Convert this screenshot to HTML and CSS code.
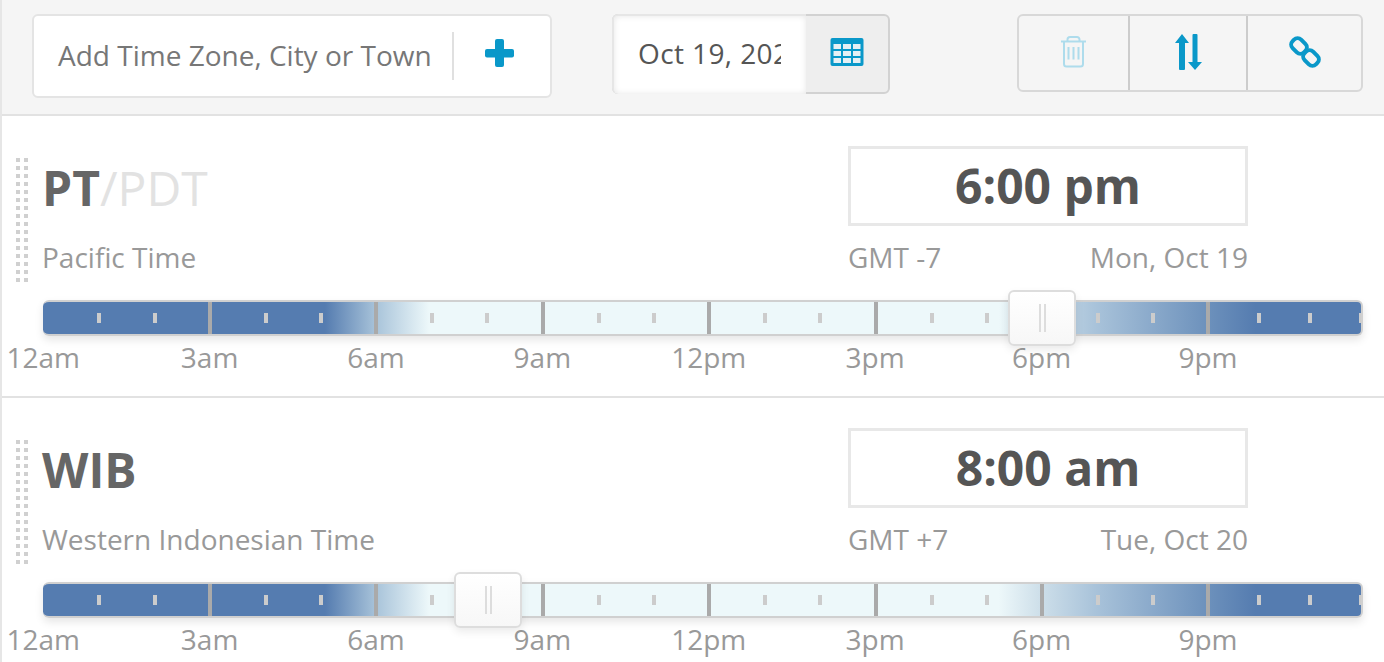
FILE: index.html
```html
<!DOCTYPE html>
<html>
  <head>
    <title>Time Zone Converter</title>
    <link rel="stylesheet" href="styles.css">
  </head>
  <body>
    <div class="toolbar">
      <div class="add-zone">
        <span class="add-text">Add Time Zone, City or Town</span>
        <span class="add-btn">
          <svg width="29" height="28" viewBox="0 0 29 28" fill="#0a98c9">
            <rect x="10" y="0" width="9" height="28" rx="2"/>
            <rect x="0" y="10" width="29" height="8.500" rx="2"/>
          </svg>
        </span>
      </div>
      <div class="date-picker">
        <div class="date-input"><span class="date-text">Oct 19, 2020</span></div>
        <div class="date-btn">
          <svg width="34" height="30" viewBox="0 0 34 30">
            <rect x="0.5" y="1" width="33" height="28" rx="2" fill="#0a98c9"/>
            <g fill="#e6f0f4">
              <rect x="3.5" y="7" width="7.5" height="5"/><rect x="13" y="7" width="8" height="5"/><rect x="23" y="7" width="7.5" height="5"/>
              <rect x="3.5" y="14" width="7.5" height="5"/><rect x="13" y="14" width="8" height="5"/><rect x="23" y="14" width="7.5" height="5"/>
              <rect x="3.5" y="21" width="7.5" height="5"/><rect x="13" y="21" width="8" height="5"/><rect x="23" y="21" width="7.5" height="5"/>
            </g>
          </svg>
        </div>
      </div>
      <div class="actions">
        <div class="action action-trash">
          <svg width="26" height="32" viewBox="0 0 26 32" fill="none" stroke="#aedcec" stroke-width="2">
            <path d="M0 5.500h25"/>
            <path d="M6.500 5.500V3.500a2.500 2.500 0 0 1 2.500-2.500h7a2.500 2.500 0 0 1 2.500 2.500v2"/>
            <path d="M3 5.500v22.500a2.500 2.500 0 0 0 2.500 2.500h14a2.500 2.500 0 0 0 2.500-2.500V5.500"/>
            <path d="M7.500 11v12.500M12.500 11v12.500M17.500 11v12.500"/>
          </svg>
        </div>
        <div class="action action-sort">
          <svg width="27" height="36" viewBox="0 0 27 36" fill="#0a98c9">
            <path d="M7 0l7 9h-4v26a1 1 0 0 1-1 1H5a1 1 0 0 1-1-1V9H0z"/>
            <path d="M20 36l-7-8h4.500V1a1 1 0 0 1 1-1h3a1 1 0 0 1 1 1v27H27z"/>
          </svg>
        </div>
        <div class="action action-link">
          <svg width="32" height="32" viewBox="0 0 32 32" fill="none" stroke="#0a98c9" stroke-width="4">
            <rect x="-8" y="-6" width="16" height="12" rx="5" transform="translate(10 10) rotate(45)"/>
            <rect x="-8" y="-6" width="16" height="12" rx="5" transform="translate(22 22) rotate(45)"/>
          </svg>
        </div>
      </div>
    </div>

    <div class="zone">
      <div class="zone-top">
        <div class="handle"></div>
        <div class="zone-name">
          <div class="abbr"><b>PT</b><span class="abbr-alt">/PDT</span></div>
          <div class="full-name">Pacific Time</div>
        </div>
        <div class="clock">
          <div class="clock-time">6:00 pm</div>
          <div class="clock-meta"><span>GMT -7</span><span>Mon, Oct 19</span></div>
        </div>
      </div>
      <div class="track">
        <div class="segs">
          <div class="seg first"><i></i><i></i></div>
          <div class="seg"><i></i><i></i></div>
          <div class="seg"><i></i><i></i></div>
          <div class="seg"><i></i><i></i></div>
          <div class="seg"><i></i><i></i></div>
          <div class="seg"><i></i><i></i></div>
          <div class="seg"><i></i><i></i></div>
          <div class="seg last"><i></i><i></i><i></i></div>
        </div>
        <div class="thumb" style="left: 965px"><i></i><i></i></div>
      </div>
      <div class="hours">
        <span>12am</span><span>3am</span><span>6am</span><span>9am</span><span>12pm</span><span>3pm</span><span>6pm</span><span>9pm</span>
      </div>
    </div>

    <div class="zone">
      <div class="zone-top">
        <div class="handle"></div>
        <div class="zone-name">
          <div class="abbr"><b>WIB</b></div>
          <div class="full-name">Western Indonesian Time</div>
        </div>
        <div class="clock">
          <div class="clock-time">8:00 am</div>
          <div class="clock-meta"><span>GMT +7</span><span>Tue, Oct 20</span></div>
        </div>
      </div>
      <div class="track">
        <div class="segs">
          <div class="seg first"><i></i><i></i></div>
          <div class="seg"><i></i><i></i></div>
          <div class="seg"><i></i><i></i></div>
          <div class="seg"><i></i><i></i></div>
          <div class="seg"><i></i><i></i></div>
          <div class="seg"><i></i><i></i></div>
          <div class="seg"><i></i><i></i></div>
          <div class="seg last"><i></i><i></i><i></i></div>
        </div>
        <div class="thumb" style="left: 411px"><i></i><i></i></div>
      </div>
      <div class="hours">
        <span>12am</span><span>3am</span><span>6am</span><span>9am</span><span>12pm</span><span>3pm</span><span>6pm</span><span>9pm</span>
      </div>
    </div>
  </body>
</html>
```

FILE: styles.css
```css
html, body { height: 100%; overflow: hidden; }
body { margin: 0; border-left: 2px solid #e6e6e6; font-family: "Open Sans", sans-serif; background: #fff; }

.toolbar { display: flex; align-items: flex-start; height: 114px; background: #f5f5f5; border-bottom: 2px solid #e2e2e2; padding-left: 30px; }

.add-zone { display: flex; align-items: center; width: 520px; height: 84px; margin-top: 14px; box-sizing: border-box; background: #fff; border: 2px solid #e4e4e4; border-radius: 6px; }
.add-text { width: 394px; padding: 0 0 2px 24px; font-size: 28px; color: #777; white-space: nowrap; }
.add-btn { display: flex; justify-content: center; align-items: center; flex-grow: 1; height: 48px; padding: 0 6px 6px 0; box-sizing: border-box; border-left: 2px solid #e0e0e0; }

.date-picker { display: flex; width: 278px; height: 80px; margin-top: 14px; margin-left: 60px; box-sizing: border-box; background: #eee; border: 2px solid #d2d2d2; border-radius: 6px; }
.date-input { width: 194px; height: 80px; margin: -2px 0 0 -2px; box-sizing: border-box; padding: 0 25px 0 24px; background: #fff; border: solid #e6e6e6; border-width: 2px 0 0 2px; border-radius: 6px 0 0 6px; box-shadow: inset 0 0 6px rgba(0, 0, 0, 0.1); }
.date-text { display: block; overflow: hidden; white-space: nowrap; font-size: 28px; letter-spacing: 0.4px; line-height: 74px; color: #555; }
.date-btn { display: flex; justify-content: center; align-items: center; flex-grow: 1; height: 76px; padding-bottom: 4px; box-sizing: border-box; }

.actions { display: flex; width: 346px; height: 78px; margin-top: 14px; margin-left: 127px; box-sizing: border-box; border: 2px solid #d8d8d8; border-radius: 6px; }
.action { display: flex; justify-content: center; align-items: center; height: 74px; padding-bottom: 2px; box-sizing: border-box; border-left: 2px solid #ccc; }
.action-trash { width: 109px; border-left: none; }
.action-sort { width: 118px; }
.action-link { flex-grow: 1; }

.zone { height: 250px; border-bottom: 2px solid #e2e2e2; padding: 30px 0 0 41px; }

.zone-top { display: flex; height: 154px; margin-left: -27px; }
.handle { width: 12px; height: 124px; margin-top: 12px; margin-right: 14px; background-image: conic-gradient(#d0d0d0 25%, transparent 0); background-size: 8px 8px; background-position: -4px 0; }
.zone-name { flex-grow: 1; }
.abbr { height: 88px; font-size: 48px; line-height: 84px; color: #666; }
.abbr-alt { color: #e2e2e2; }
.full-name { margin-top: 4px; font-size: 28px; line-height: 38px; color: #999; }
.clock { width: 400px; margin-right: 136px; }
.clock-time { height: 80px; box-sizing: border-box; border: 3px solid #e8e8e8; font-size: 48px; font-weight: 700; line-height: 74px; text-align: center; color: #555; }
.clock-meta { display: flex; justify-content: space-between; margin-top: 12px; font-size: 28px; line-height: 38px; color: #999; }

.track { position: relative; width: 1320px; height: 36px; box-sizing: border-box; border: solid #d0d0d0; border-width: 2px 2px 2px 0; border-radius: 6px; background: linear-gradient(to right, #557cb0 0, #557cb0 21.4%, #a9c4da 25.3%, #edf8fa 29.3%, #edf8fa 72.500%, #cfe0ea 75.500%, #a9c3da 79.800%, #6f93bd 88%, #557cb0 92%); box-shadow: 0 4px 8px rgba(0, 0, 0, 0.1); }
.segs { display: flex; height: 100%; overflow: hidden; }
.seg { display: flex; align-items: center; gap: 51px; flex: 0 0 166.400px; box-sizing: border-box; padding-left: 52px; border-left: 4px solid #aaa; }
.seg.first { flex-basis: 165px; gap: 52px; padding-left: 54px; border-left: none; }
.seg.last { flex-basis: 153px; gap: 47px; padding-left: 47px; }
.seg i { display: block; flex-shrink: 0; width: 4px; height: 10px; background: #ccc; }

.thumb { display: flex; justify-content: center; gap: 3px; position: absolute; top: -12px; width: 68px; height: 56px; box-sizing: border-box; padding: 12px 0; background: linear-gradient(#fff, #f7f7f7); border: 2px solid #ddd; border-radius: 6px; box-shadow: 0 4px 8px rgba(0, 0, 0, 0.08); }
.thumb i { display: block; width: 2px; background: #ddd; }

.hours { display: flex; margin-left: -83px; margin-top: 2px; font-size: 28px; line-height: 38px; color: #999; }
.hours span { flex: 0 0 166.400px; text-align: center; }
```
